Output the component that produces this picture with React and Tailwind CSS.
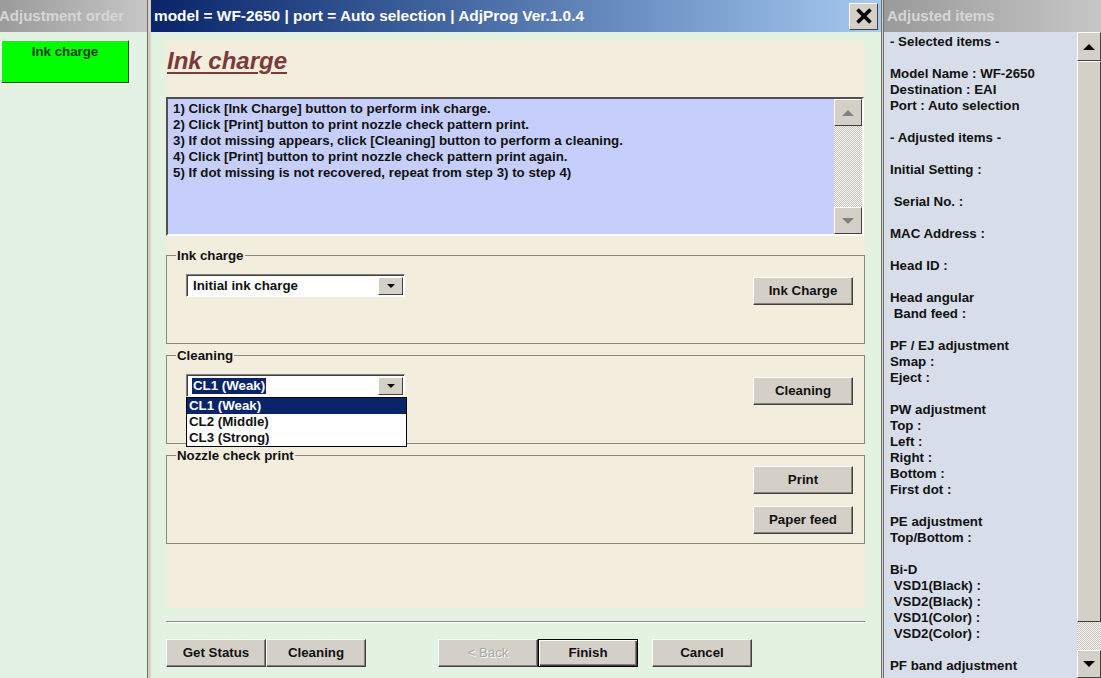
import React from 'react'

// raised win9x style button
function Btn({ children, className = '', disabled = false, isDefault = false }) {
  return (
    <div
      className={`flex items-center justify-center bg-[#d4d0c8] ${
        isDefault
          ? 'border border-black shadow-[inset_1px_1px_0_#ffffff,inset_-1px_-1px_0_#404040,inset_-2px_-2px_0_#808080]'
          : 'border border-t-white border-l-white border-r-[#404040] border-b-[#404040] shadow-[inset_-1px_-1px_0_#808080]'
      } ${disabled ? 'text-[#a8a8a8] [text-shadow:1px_1px_0_#ffffff]' : 'text-[#111111]'} ${className}`}
    >
      {children}
    </div>
  )
}

function Arrow({ up = false, color = '#000000' }) {
  return (
    <svg width="14" height="8" viewBox="0 0 14 8">
      {up ? (
        <polygon points="1,7 13,7 7,1" fill={color} />
      ) : (
        <polygon points="1,1 13,1 7,7" fill={color} />
      )}
    </svg>
  )
}

function Dropdown({ value, selected = false }) {
  return (
    <div className="w-[219px] h-[23px] flex bg-white border border-t-[#808080] border-l-[#808080] border-r-white border-b-white shadow-[inset_1px_1px_0_#404040]">
      <div className="flex-1 flex items-center pl-[5px] pt-[1px]">
        <span className={selected ? 'bg-[#0a246a] text-white px-[1px] leading-[16px]' : 'px-[1px] text-[#111111]'}>{value}</span>
      </div>
      <div className="mt-[2px] mr-[1px] w-[25px] h-[18px] flex items-center justify-center bg-[#d4d0c8] border border-t-white border-l-white border-r-[#404040] border-b-[#404040]">
        <svg width="8" height="5" viewBox="0 0 8 5"><polygon points="0,0 8,0 4,4" fill="#000" /></svg>
      </div>
    </div>
  )
}

function Group({ title, children }) {
  return (
    <fieldset className="border border-[#8a877c] h-[97px]">
      <legend className="ml-[9px] px-[1px] leading-[16px] pt-[1px]">{title}</legend>
      {children}
    </fieldset>
  )
}

const STEPS = [
  '1) Click [Ink Charge] button to perform ink charge.',
  '2) Click [Print] button to print nozzle check pattern print.',
  '3) If dot missing appears, click [Cleaning] button to perform a cleaning.',
  '4) Click [Print] button to print nozzle check pattern print again.',
  '5) If dot missing is not recovered, repeat from step 3) to step 4)'
]

const ADJUSTED = [
  '- Selected items -', '', 'Model Name : WF-2650', 'Destination : EAI', 'Port : Auto selection', '',
  '- Adjusted items -', '', 'Initial Setting :', '', ' Serial No. :', '', 'MAC Address :', '',
  'Head ID :', '', 'Head angular', ' Band feed :', '', 'PF / EJ adjustment', 'Smap :', 'Eject :', '',
  'PW adjustment', 'Top :', 'Left :', 'Right :', 'Bottom :', 'First dot :', '',
  'PE adjustment', 'Top/Bottom :', '', 'Bi-D', ' VSD1(Black) :', ' VSD2(Black) :', ' VSD1(Color) :',
  ' VSD2(Color) :', '', 'PF band adjustment'
]

export default function App() {
  return (
    <div className="w-[1101px] h-[678px] flex overflow-hidden font-['Liberation_Sans',Arial,sans-serif] text-[13.3px] font-bold text-[#111111]">
      {/* Left: adjustment order */}
      <div className="w-[147px] flex flex-col bg-[#e3f2e3]">
        <div className="h-[32px] flex items-center bg-linear-to-r from-[#9a9a9a] to-[#c6c6c6] text-[15px] text-[#d6d6d6] -ml-[1px]">
          Adjustment order
        </div>
        <div className="mt-[8px] ml-[1px] w-[128px] h-[43px] bg-[#00ff00] border border-t-white border-l-white border-r-[#404040] border-b-[#404040] text-center leading-[22px] text-[#0b3a0b]">
          Ink charge
        </div>
      </div>
      <div className="w-[4px] border-l border-[#6f6f6f] bg-[#d4d0c8]" />

      {/* Main window */}
      <div className="w-[730px] flex flex-col bg-[#e3f2e1]">
        <div className="h-[32px] flex items-center bg-linear-to-r from-[#0a246a] to-[#a6caf0] text-white text-[15.4px] pl-[3px] pr-[3px]">
          <span className="flex-1">model = WF-2650 | port = Auto selection | AdjProg Ver.1.0.4</span>
          <div className="w-[29px] h-[27px] flex items-center justify-center bg-[#d4d0c8] border border-t-white border-l-white border-r-[#404040] border-b-[#404040]">
            <svg width="18" height="18" viewBox="0 0 18 18">
              <path d="M2.5 2.5 L15.5 15.5 M15.5 2.5 L2.5 15.5" stroke="#000" strokeWidth="3.6" />
            </svg>
          </div>
        </div>

        <div className="pl-[15px] pt-[8px]">
          <div className="w-[699px] h-[568px] bg-[#f3eddd] flex flex-col">
            <div className="pt-[7px] pl-[1px] leading-[28px] text-[24px] italic text-[#7b3a3a] underline decoration-2 underline-offset-[3px]">
              Ink charge
            </div>

            {/* instructions */}
            <div className="mt-[22px] w-[698px] h-[139px] flex bg-[#c6cffb] border-2 border-t-[#505050] border-l-[#505050] border-r-white border-b-white">
              <div className="flex-1 pl-[5px] pt-[2px] leading-[16px]">
                {STEPS.map((s) => (
                  <div key={s}>{s}</div>
                ))}
              </div>
              <div className="w-[28px] flex flex-col">
                <div className="h-[27px] flex items-center justify-center bg-[#d4d0c8] border border-t-white border-l-white border-r-[#404040] border-b-[#404040]">
                  <Arrow up color="#808080" />
                </div>
                <div className="flex-1 bg-[image:repeating-conic-gradient(#c9c5bd_0%_25%,#f6f4f0_0%_50%)] bg-[length:2px_2px]" />
                <div className="h-[27px] flex items-center justify-center bg-[#d4d0c8] border border-t-white border-l-white border-r-[#404040] border-b-[#404040]">
                  <Arrow color="#808080" />
                </div>
              </div>
            </div>

            {/* groups */}
            <div className="mt-[11px] flex flex-col gap-[3px]">
              <Group title="Ink charge">
                <div className="flex items-start justify-between pl-[19px] pr-[11px] pt-[10px]">
                  <Dropdown value="Initial ink charge" />
                  <Btn className="mt-[3px] w-[100px] h-[28px]">Ink Charge</Btn>
                </div>
              </Group>
              <Group title="Cleaning">
                <div className="flex items-start justify-between pl-[19px] pr-[11px] pt-[10px]">
                  <div className="relative">
                    <Dropdown value="CL1 (Weak)" selected />
                    <div className="absolute left-0 top-[23px] w-[221px] h-[50px] bg-white border border-black z-10 leading-[16px]">
                      <div className="bg-[#0a246a] text-white pl-[2px]">CL1 (Weak)</div>
                      <div className="pl-[2px]">CL2 (Middle)</div>
                      <div className="pl-[2px]">CL3 (Strong)</div>
                    </div>
                  </div>
                  <Btn className="mt-[3px] w-[100px] h-[28px]">Cleaning</Btn>
                </div>
              </Group>
              <Group title="Nozzle check print">
                <div className="flex flex-col items-end pr-[11px] pt-[2px] gap-[12px]">
                  <Btn className="w-[100px] h-[28px]">Print</Btn>
                  <Btn className="w-[100px] h-[28px]">Paper feed</Btn>
                </div>
              </Group>
            </div>
          </div>

          <div className="mt-[13px] w-[699px] border-t border-[#8a8a8a] border-b border-b-white" />

          <div className="mt-[16px] flex items-center">
            <Btn className="w-[100px] h-[28px]">Get Status</Btn>
            <Btn className="w-[100px] h-[28px]">Cleaning</Btn>
            <Btn disabled className="ml-[72px] w-[100px] h-[28px] font-normal">&lt; Back</Btn>
            <Btn isDefault className="w-[100px] h-[28px]">Finish</Btn>
            <Btn className="ml-[14px] w-[100px] h-[28px]">Cancel</Btn>
          </div>
        </div>
      </div>
      <div className="w-[3px] border-l border-r border-[#6f6f6f] bg-[#d4d0c8]" />

      {/* Right: adjusted items */}
      <div className="flex-1 flex flex-col bg-[#d8dee9]">
        <div className="h-[32px] flex items-center pl-[3px] bg-linear-to-r from-[#9a9a9a] to-[#c6c6c6] text-[15px] text-[#d6d6d6]">
          Adjusted items
        </div>
        <div className="flex-1 flex min-h-0">
          <div className="flex-1 pl-[6px] pt-[2px] leading-[16px] overflow-hidden">
            {ADJUSTED.map((line, i) => (
              <div key={i} className="h-[16px] whitespace-pre">{line}</div>
            ))}
          </div>
          <div className="w-[24px] flex flex-col">
            <div className="h-[29px] flex items-center justify-center bg-[#d4d0c8] border border-t-white border-l-white border-r-[#404040] border-b-[#404040]">
              <Arrow up />
            </div>
            <div className="h-[561px] bg-[#d4d0c8] border border-t-white border-l-white border-r-[#404040] border-b-[#404040]" />
            <div className="flex-1 bg-[image:repeating-conic-gradient(#c9c5bd_0%_25%,#f6f4f0_0%_50%)] bg-[length:2px_2px]" />
            <div className="h-[28px] flex items-center justify-center bg-[#d4d0c8] border border-t-white border-l-white border-r-[#404040] border-b-[#404040]">
              <Arrow />
            </div>
          </div>
        </div>
      </div>
    </div>
  )
}
